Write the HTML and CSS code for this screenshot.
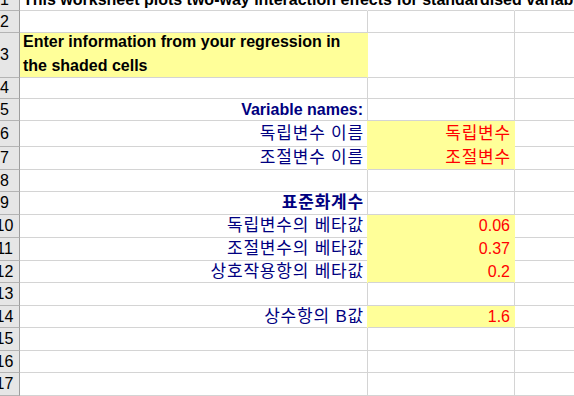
FILE: index.html
```html
<!DOCTYPE html>
<html lang="ko">
<head>
  <meta charset="UTF-8">
  <title>Interaction effects</title>
  <link rel="stylesheet" href="styles.css">
</head>
<body>
  <div class="sheet">
    <!-- row 1 -->
    <div class="rh r1">1</div>
    <div class="cell r1 title">This worksheet plots two-way interaction effects for standardised variables</div>
    <div class="cell r1"></div>
    <div class="cell r1 last"></div>

    <div class="rh r2">2</div>
    <div class="cell r2"></div>
    <div class="cell r2"></div>
    <div class="cell r2 last"></div>

    <div class="rh r3">3</div>
    <div class="cell r3 fill intro">Enter information from your regression in<br>the shaded cells</div>
    <div class="cell r3"></div>
    <div class="cell r3 last"></div>

    <div class="rh r4">4</div>
    <div class="cell r4"></div>
    <div class="cell r4"></div>
    <div class="cell r4 last"></div>

    <div class="rh r5">5</div>
    <div class="cell r5 label head">Variable names:</div>
    <div class="cell r5"></div>
    <div class="cell r5 last"></div>

    <div class="rh r6">6</div>
    <div class="cell r6 label kr">독립변수 이름</div>
    <div class="cell r6 fill value kr inner">독립변수</div>
    <div class="cell r6 last"></div>

    <div class="rh r7">7</div>
    <div class="cell r7 label kr">조절변수 이름</div>
    <div class="cell r7 fill value kr">조절변수</div>
    <div class="cell r7 last"></div>

    <div class="rh r8">8</div>
    <div class="cell r8"></div>
    <div class="cell r8"></div>
    <div class="cell r8 last"></div>

    <div class="rh r9">9</div>
    <div class="cell r9 label head kr">표준화계수</div>
    <div class="cell r9"></div>
    <div class="cell r9 last"></div>

    <div class="rh r10">10</div>
    <div class="cell r10 label kr">독립변수의 베타값</div>
    <div class="cell r10 fill value inner">0.06</div>
    <div class="cell r10 last"></div>

    <div class="rh r11">11</div>
    <div class="cell r11 label kr">조절변수의 베타값</div>
    <div class="cell r11 fill value inner">0.37</div>
    <div class="cell r11 last"></div>

    <div class="rh r12">12</div>
    <div class="cell r12 label kr">상호작용항의 베타값</div>
    <div class="cell r12 fill value">0.2</div>
    <div class="cell r12 last"></div>

    <div class="rh r13">13</div>
    <div class="cell r13"></div>
    <div class="cell r13"></div>
    <div class="cell r13 last"></div>

    <div class="rh r14">14</div>
    <div class="cell r14 label kr">상수항의 B값</div>
    <div class="cell r14 fill value">1.6</div>
    <div class="cell r14 last"></div>

    <div class="rh r15">15</div>
    <div class="cell r15"></div>
    <div class="cell r15"></div>
    <div class="cell r15 last"></div>

    <div class="rh r16">16</div>
    <div class="cell r16"></div>
    <div class="cell r16"></div>
    <div class="cell r16 last"></div>

    <div class="rh r17">17</div>
    <div class="cell r17"></div>
    <div class="cell r17"></div>
    <div class="cell r17 last"></div>

    <div class="rh r18">18</div>
    <div class="cell r18"></div>
    <div class="cell r18"></div>
    <div class="cell r18 last"></div>
  </div>
</body>
</html>
```

FILE: styles.css
```css
html, body {
  margin: 0;
  background: white;
  overflow: hidden;
}
body {
  width: 574px;
  height: 396px;
  font-family: "Liberation Sans", Arial, "Noto Sans CJK KR", sans-serif;
  font-size: 16px;
  line-height: 18px;
}
.sheet {
  display: grid;
  grid-template-columns: 31px 348px 147px 120px;
  grid-template-rows: 22px 22px 45px 21px 22px 26px 23px 22px 23px 23px 23px 22px 23px 22px 23px 22px 23px 23px;
  margin: -11px 0 0 -11px;
}
.rh {
  background: #e6e6e6;
  border-right: 1px solid #9e9e9e;
  border-bottom: 1px solid #b4b4b4;
  box-sizing: border-box;
  display: flex;
  align-items: center;
  justify-content: center;
  color: black;
  padding-left: 1px;
}
.cell {
  border-right: 1px solid #d4d4d4;
  border-bottom: 1px solid #d4d4d4;
  box-sizing: border-box;
  display: flex;
  align-items: center;
  white-space: nowrap;
  min-width: 0;
}
.title {
  font-weight: bold;
  color: black;
  padding-left: 3px;
  position: relative;
  z-index: 1;
  border-right-color: transparent;
}
.r1 + .cell {
  border-right-color: transparent;
}
.intro {
  font-weight: bold;
  color: black;
  padding-left: 3px;
  padding-bottom: 2px;
  line-height: 24px;
  white-space: normal;
}
.fill {
  background: #ffff99;
  border-right-color: #ffff99;
}
.value {
  box-shadow: -1px 0 0 #ffff99;
  justify-content: flex-end;
  padding-right: 4px;
  color: #ff0000;
}
.inner {
  border-bottom-color: #ffff99;
}
.label {
  justify-content: flex-end;
  padding-right: 4px;
  color: #000080;
}
.head {
  font-weight: bold;
}
.kr {
  font-size: 17px;
  letter-spacing: 0.8px;
  padding-right: 3px;
}
```
